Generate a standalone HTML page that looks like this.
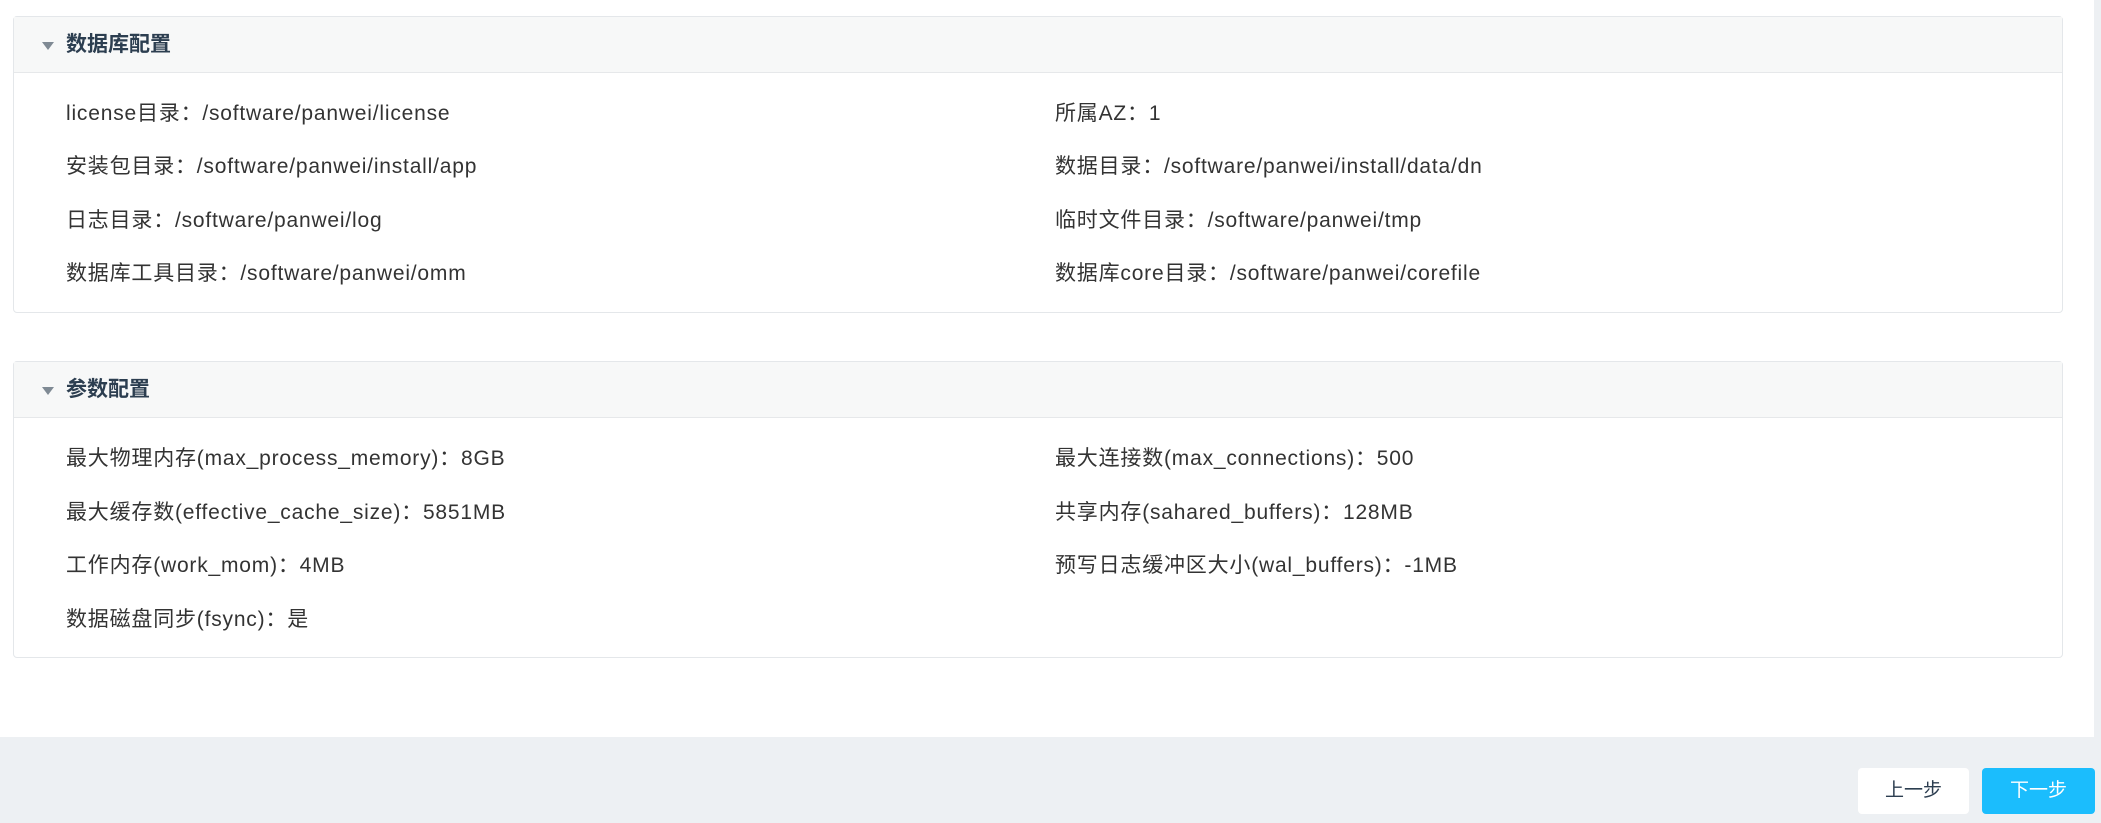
<!DOCTYPE html>
<html><head><meta charset="utf-8"><style>
*{margin:0;padding:0;box-sizing:border-box}
body{width:2101px;height:823px;overflow:hidden;background:#fff;font-family:"Liberation Sans","Noto Sans CJK SC",sans-serif;color:#333;position:relative}
.panel{position:absolute;left:13px;width:2050px;border:1px solid #e4e7ea;border-radius:4px;background:#fff}
.hd{height:56px;background:#f7f8f8;border-bottom:1px solid #e6e8ea;position:relative}
.hd .tri{position:absolute;left:28px;top:25px;width:0;height:0;border-left:6px solid transparent;border-right:6px solid transparent;border-top:8px solid #7f8a94}
.hd .t{position:absolute;left:52px;top:0;line-height:56px;font-size:21px;font-weight:bold;color:#2c3e50}
.row{position:absolute;font-size:21px;letter-spacing:0.8px;line-height:24px;color:#333;white-space:nowrap}
.foot{position:absolute;left:0;top:737px;width:2101px;height:86px;background:#edf0f3}
.strip{position:absolute;left:2094px;top:0;width:7px;height:737px;background:#edf0f3}
.btn{position:absolute;top:768px;height:46px;border-radius:4px;font-size:19px;line-height:46px;text-align:center}
</style></head><body>
<div class="panel" style="top:16px;height:297px">
<div class="hd"><div class="tri"></div><div class="t">数据库配置</div></div>
<div class="row" style="left:52px;top:85px">license目录：/software/panwei/license</div>
<div class="row" style="left:1041px;top:85px">所属AZ：1</div>
<div class="row" style="left:52px;top:138px">安装包目录：/software/panwei/install/app</div>
<div class="row" style="left:1041px;top:138px">数据目录：/software/panwei/install/data/dn</div>
<div class="row" style="left:52px;top:192px">日志目录：/software/panwei/log</div>
<div class="row" style="left:1041px;top:192px">临时文件目录：/software/panwei/tmp</div>
<div class="row" style="left:52px;top:245px">数据库工具目录：/software/panwei/omm</div>
<div class="row" style="left:1041px;top:245px">数据库core目录：/software/panwei/corefile</div>
</div>
<div class="panel" style="top:361px;height:297px">
<div class="hd"><div class="tri"></div><div class="t">参数配置</div></div>
<div class="row" style="left:52px;top:85px">最大物理内存(max_process_memory)：8GB</div>
<div class="row" style="left:1041px;top:85px">最大连接数(max_connections)：500</div>
<div class="row" style="left:52px;top:139px">最大缓存数(effective_cache_size)：5851MB</div>
<div class="row" style="left:1041px;top:139px">共享内存(sahared_buffers)：128MB</div>
<div class="row" style="left:52px;top:192px">工作内存(work_mom)：4MB</div>
<div class="row" style="left:1041px;top:192px">预写日志缓冲区大小(wal_buffers)：-1MB</div>
<div class="row" style="left:52px;top:246px">数据磁盘同步(fsync)：是</div>
</div>
<div class="strip"></div>
<div class="foot"></div>
<div class="btn" style="left:1858px;width:111px;background:#fff;color:#2c3e50">上一步</div>
<div class="btn" style="left:1982px;width:113px;background:#1bbdfd;color:#fff">下一步</div>
</body></html>
